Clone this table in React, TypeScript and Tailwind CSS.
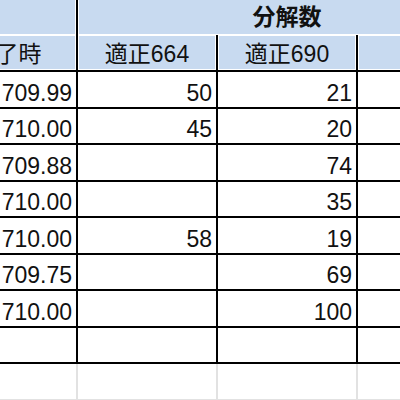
const rows = [
  ["709.99", "50", "21"],
  ["710.00", "45", "20"],
  ["709.88", "", "74"],
  ["710.00", "", "35"],
  ["710.00", "58", "19"],
  ["709.75", "", "69"],
  ["710.00", "", "100"],
  ["", "", ""],
]

const head = "bg-[#c8daf0] shadow-[inset_0_0_0_1px_#ffffff] border-r-2 border-black"

export default function App() {
  return (
    <div className="w-[400px] h-[400px] overflow-hidden bg-white text-[#111] text-[23px] font-[family-name:'Liberation_Sans','Noto_Sans_CJK_JP',sans-serif]">
      <div className="w-[560px] ml-[-62px] -mt-[3px]">
        {/* 見出し1段目 */}
        <div className="grid grid-cols-[140px_420px] h-[38px] border-b-2 border-black">
          <div className={head} />
          <div className={`${head} flex items-center justify-center pt-[3px] font-bold`}>分解数</div>
        </div>

        {/* 見出し2段目 */}
        <div className="grid grid-cols-[140px_140px_140px_140px] h-[37px] border-b-2 border-black leading-[26px]">
          <div className={`${head} flex items-end justify-center pb-[3px]`}>終了時</div>
          <div className={`${head} flex items-end justify-center pb-[3px]`}>適正664</div>
          <div className={`${head} flex items-end justify-center pb-[3px]`}>適正690</div>
          <div className={head} />
        </div>

        {rows.map((r, i) => (
          <div key={i} className="grid grid-cols-[140px_140px_140px_140px] h-[36.5px] border-b-2 border-black leading-[26px]">
            {r.map((v, j) => (
              <div key={j} className="border-r-2 border-black flex items-end justify-end pr-[4px] pb-[1px]">
                {v}
              </div>
            ))}
            <div className="border-r-2 border-black" />
          </div>
        ))}

        {/* 枠線なしの行 */}
        {[0, 1].map((i) => (
          <div key={i} className="grid grid-cols-[140px_140px_140px_140px] h-[36.5px] border-b-2 border-[#e2e2e2]">
            <div className="border-r-2 border-[#e2e2e2]" />
            <div className="border-r-2 border-[#e2e2e2]" />
            <div className="border-r-2 border-[#e2e2e2]" />
            <div className="border-r-2 border-[#e2e2e2]" />
          </div>
        ))}
      </div>
    </div>
  )
}
